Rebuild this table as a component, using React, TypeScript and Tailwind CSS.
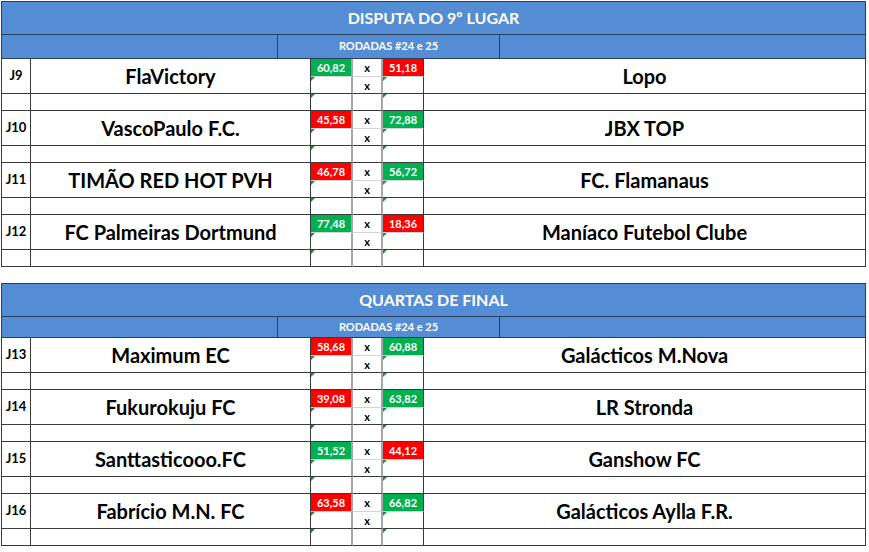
import React from "react";

type Match = {
  id: string;
  home: string;
  away: string;
  hs: string;
  as: string;
  homeWin: boolean;
};

const sections: { title: string; subH: string; matches: Match[] }[] = [
  {
    title: "DISPUTA DO 9º LUGAR",
    subH: "h-[24px]",
    matches: [
      { id: "J9", home: "FlaVictory", away: "Lopo", hs: "60,82", as: "51,18", homeWin: true },
      { id: "J10", home: "VascoPaulo F.C.", away: "JBX TOP", hs: "45,58", as: "72,88", homeWin: false },
      { id: "J11", home: "TIMÃO RED HOT PVH", away: "FC. Flamanaus", hs: "46,78", as: "56,72", homeWin: false },
      { id: "J12", home: "FC Palmeiras Dortmund", away: "Maníaco Futebol Clube", hs: "77,48", as: "18,36", homeWin: true },
    ],
  },
  {
    title: "QUARTAS DE FINAL",
    subH: "h-[21px]",
    matches: [
      { id: "J13", home: "Maximum EC", away: "Galácticos M.Nova", hs: "58,68", as: "60,88", homeWin: false },
      { id: "J14", home: "Fukurokuju FC", away: "LR Stronda", hs: "39,08", as: "63,82", homeWin: false },
      { id: "J15", home: "Santtasticooo.FC", away: "Ganshow FC", hs: "51,52", as: "44,12", homeWin: true },
      { id: "J16", home: "Fabrício M.N. FC", away: "Galácticos Aylla F.R.", hs: "63,58", as: "66,82", homeWin: false },
    ],
  },
];

function Tick() {
  return (
    <span className="absolute left-0 top-0 w-0 h-0 border-t-[4px] border-r-[4px] border-t-[#1e8c3a] border-r-transparent" />
  );
}

function MatchBlock({ m }: { m: Match }) {
  const score = "flex items-center justify-center border-b border-b-[#d4d4d4] text-[11px] font-bold text-white leading-none ";
  return (
    <div className="grid grid-cols-[29px_280px_42px_30px_41px_1fr] grid-rows-[18px_17px_17px]">
      <div className="row-span-2 flex items-center justify-center border-r border-b border-[#3a3a3a] text-[13px] font-bold text-black">
        {m.id}
      </div>
      <div className="row-span-2 flex items-center justify-center border-r border-b border-[#3a3a3a] text-[20px] font-bold text-black">
        {m.home}
      </div>
      <div className={score + "border-r-2 border-r-[#a6a6a6] " + (m.homeWin ? "bg-[#00b050]" : "bg-[#ff0000]")}>
        {m.hs}
      </div>
      <div className="flex items-center justify-center border-r-2 border-r-[#a6a6a6] border-b border-b-[#d4d4d4] text-[11px] font-bold text-black leading-none">
        x
      </div>
      <div className={score + "border-r border-r-[#3a3a3a] " + (m.homeWin ? "bg-[#ff0000]" : "bg-[#00b050]")}>
        {m.as}
      </div>
      <div className="row-span-2 flex items-center justify-center border-b border-[#3a3a3a] text-[20px] font-bold text-black">
        {m.away}
      </div>

      <div className="relative border-r-2 border-r-[#a6a6a6] border-b border-b-[#3a3a3a]">
        <Tick />
      </div>
      <div className="flex items-center justify-center border-r-2 border-r-[#a6a6a6] border-b border-b-[#3a3a3a] text-[11px] font-bold text-black leading-none">
        x
      </div>
      <div className="relative border-r border-r-[#3a3a3a] border-b border-b-[#3a3a3a]">
        <Tick />
      </div>

      <div className="border-r border-b border-[#3a3a3a]" />
      <div className="border-r border-b border-[#3a3a3a]" />
      <div className="relative border-r-2 border-r-[#a6a6a6] border-b border-b-[#3a3a3a]">
        <Tick />
      </div>
      <div className="border-r-2 border-r-[#a6a6a6] border-b border-b-[#3a3a3a]" />
      <div className="relative border-r border-r-[#3a3a3a] border-b border-b-[#3a3a3a]">
        <Tick />
      </div>
      <div className="border-b border-[#3a3a3a]" />
    </div>
  );
}

export default function App() {
  return (
    <div className="w-[869px] h-[552px] bg-white pt-px pl-px font-['Lato','Open_Sans',sans-serif]">
      <div className="flex flex-col gap-[16px] w-[865px]">
        {sections.map((s) => (
          <div key={s.title} className="border border-[#3a3a3a] border-b-0">
            <div className="h-[33px] flex items-center justify-center bg-[#548dd4] border-b border-[#2a3f5f] text-[16px] font-bold text-white">
              {s.title}
            </div>
            <div className={"grid grid-cols-[276px_222px_1fr] bg-[#548dd4] border-b border-[#2a3f5f] " + s.subH}>
              <div className="border-r border-[#2a3f5f]" />
              <div className="flex items-center justify-center border-r border-[#2a3f5f] text-[11px] font-bold text-white">
                RODADAS #24 e 25
              </div>
              <div />
            </div>
            {s.matches.map((m) => (
              <MatchBlock key={m.id} m={m} />
            ))}
          </div>
        ))}
      </div>
    </div>
  );
}
